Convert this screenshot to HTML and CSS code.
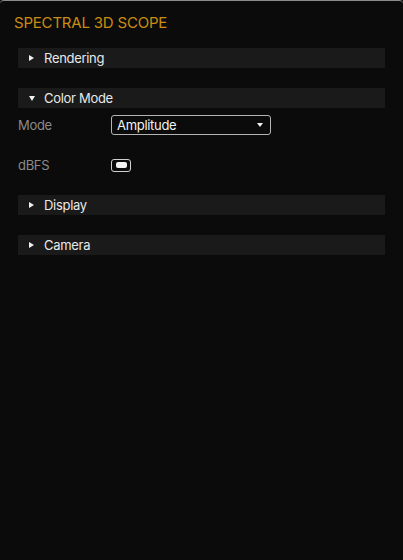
FILE: index.html
```html
<!DOCTYPE html>
<html>
<head>
<meta charset="utf-8">
<link rel="stylesheet" href="styles.css">
</head>
<body>
<div class="panel">
  <div class="title">SPECTRAL 3D SCOPE</div>
  <div class="sections">
    <div class="section">
      <div class="header"><span class="tri-right"></span><span class="hlabel">Rendering</span></div>
    </div>
    <div class="section">
      <div class="header"><span class="tri-down"></span><span class="hlabel">Color Mode</span></div>
      <div class="content">
        <div class="row">
          <span class="label">Mode</span>
          <div class="select"><span>Amplitude</span><span class="caret"></span></div>
        </div>
        <div class="row">
          <span class="label">dBFS</span>
          <div class="toggle"><span class="knob"></span></div>
        </div>
      </div>
    </div>
    <div class="section">
      <div class="header"><span class="tri-right"></span><span class="hlabel">Display</span></div>
    </div>
    <div class="section">
      <div class="header"><span class="tri-right"></span><span class="hlabel">Camera</span></div>
    </div>
  </div>
</div>
</body>
</html>
```
FILE: styles.css
```css
html, body {
  margin: 0;
  padding: 0;
  background: #0b0b0b;
}
body {
  font-family: Inter, "Noto Sans", sans-serif;
}
.panel {
  box-sizing: border-box;
  min-height: 560px;
  background: #0b0b0b;
  border-top: 1px solid #8c8c8c;
  border-radius: 4px 4px 0 0;
  padding: 12px 18px 0 14px;
}
.title {
  color: #c98d12;
  font-size: 15px;
  line-height: 20px;
  letter-spacing: -0.2px;
}
.sections {
  margin-top: 15px;
  margin-left: 4px;
  display: flex;
  flex-direction: column;
  gap: 20px;
}
.header {
  height: 20px;
  background: #1a1a1a;
  display: flex;
  align-items: center;
  color: #e8e8e8;
  font-size: 13px;
  letter-spacing: -0.3px;
}
.tri-right {
  width: 0;
  height: 0;
  margin-left: 11px;
  border-top: 3.5px solid transparent;
  border-bottom: 3.5px solid transparent;
  border-left: 5px solid #f0f0f0;
}
.tri-down {
  width: 0;
  height: 0;
  margin-left: 11px;
  border-left: 3px solid transparent;
  border-right: 3px solid transparent;
  border-top: 5px solid #f0f0f0;
}
.hlabel {
  margin-left: 10px;
}
.tri-down + .hlabel {
  margin-left: 9px;
}
.content {
  padding-top: 7px;
  display: flex;
  flex-direction: column;
  gap: 20px;
}
.row {
  height: 20px;
  display: flex;
  align-items: center;
}
.label {
  width: 93px;
  color: #8a8a8a;
  font-size: 13px;
  letter-spacing: -0.3px;
}
.select {
  box-sizing: border-box;
  width: 160px;
  height: 20px;
  border: 1px solid #b4b4b4;
  border-radius: 3px;
  display: flex;
  align-items: center;
  justify-content: space-between;
  padding: 0 7px 0 5px;
  color: #f2f2f2;
  font-size: 13px;
  letter-spacing: -0.3px;
}
.caret {
  width: 0;
  height: 0;
  border-left: 3.5px solid transparent;
  border-right: 3.5px solid transparent;
  border-top: 4px solid #f0f0f0;
}
.toggle {
  box-sizing: border-box;
  width: 20px;
  height: 13px;
  border: 1px solid #d0d0d0;
  border-radius: 3px;
  display: flex;
  align-items: center;
  justify-content: center;
}
.knob {
  width: 11px;
  height: 6px;
  background: #f2f2f2;
  border-radius: 2px;
}
```
